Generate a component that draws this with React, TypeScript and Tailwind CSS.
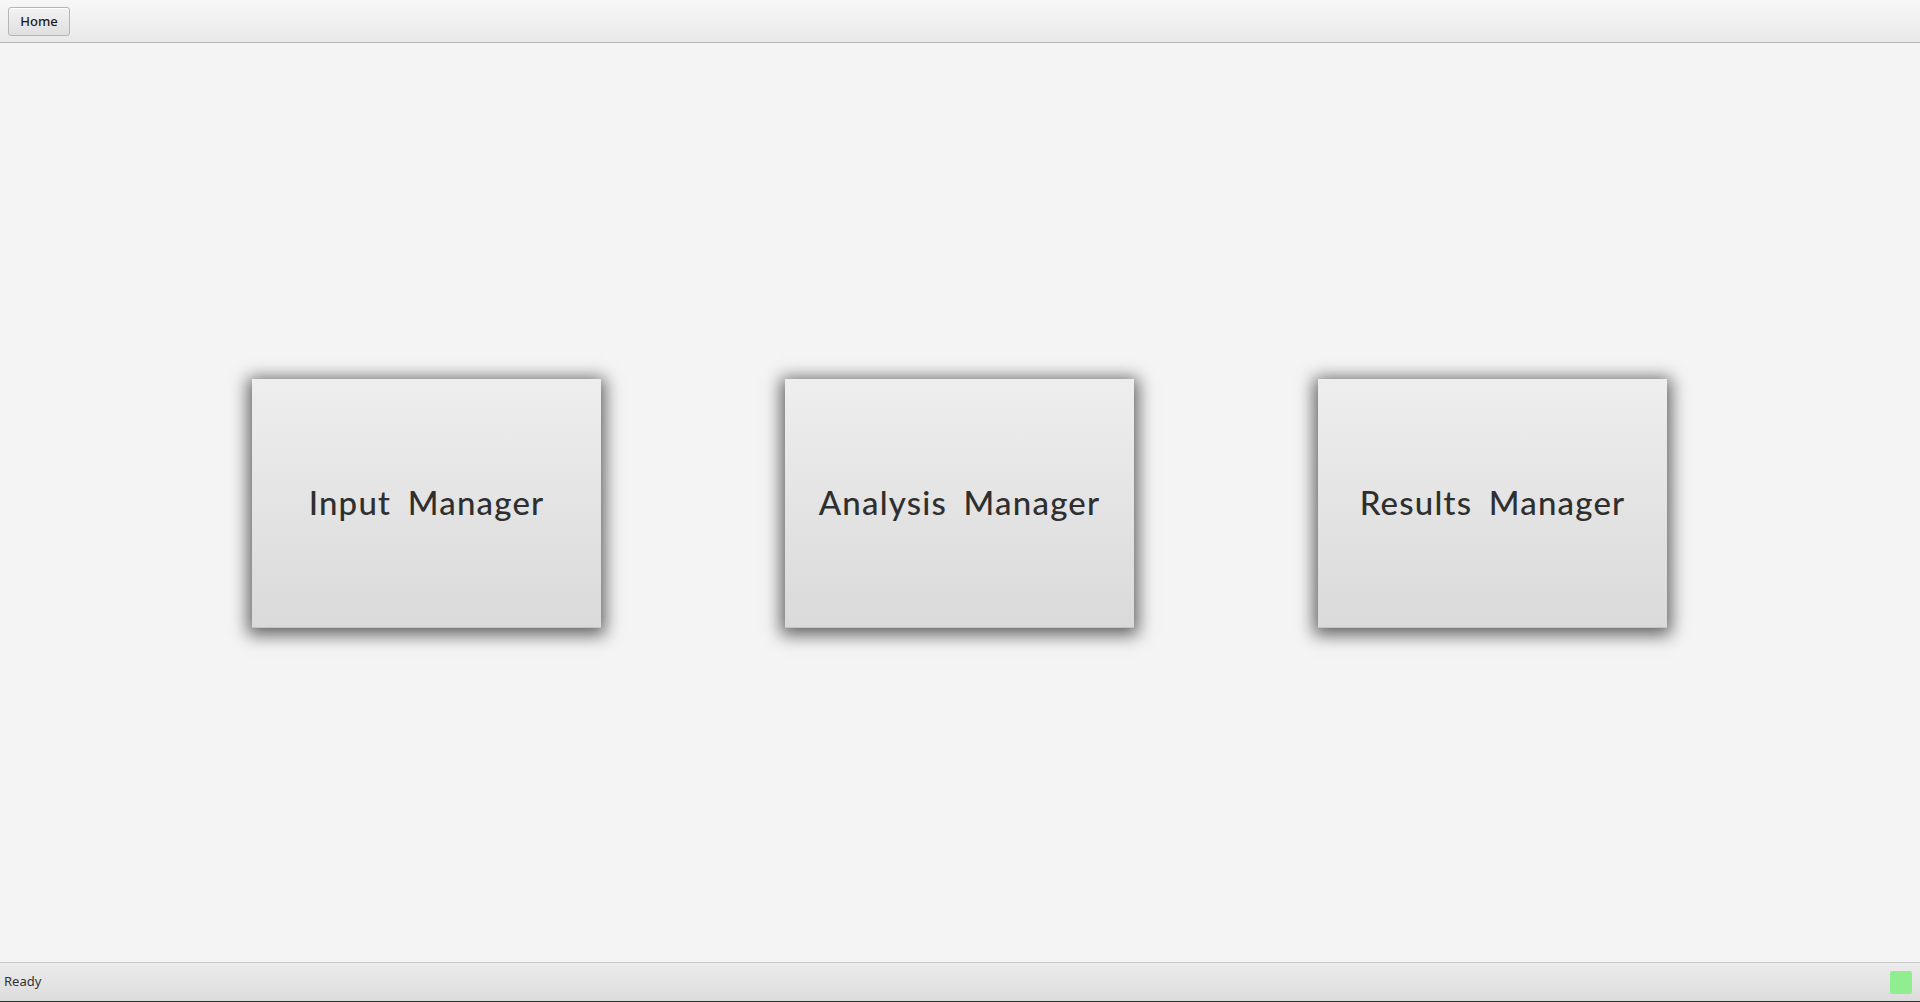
import React from 'react';

const cards = ['Input Manager', 'Analysis Manager', 'Results Manager'];

export default function App() {
  return (
    <div className="flex h-[1002px] w-[1920px] flex-col overflow-hidden bg-[#f4f4f4] font-['Noto_Sans',sans-serif]">
      {/* Toolbar */}
      <div className="flex h-[43px] shrink-0 items-start border-b border-[#b8b8b8] bg-gradient-to-b from-[#f7f7f7] to-[#e9e9e9] pl-[8px] pt-[7px]">
        <button className="flex h-[29px] w-[62px] items-center justify-center rounded-[3px] border border-[#b5b5b5] bg-gradient-to-b from-[#f3f3f3] to-[#dfdfdf] text-[13px] font-medium text-[#1a1a1a] shadow-[inset_0_1px_0_#ffffff]">
          Home
        </button>
      </div>

      {/* Main area */}
      <div className="flex flex-1 items-center justify-center gap-[184px] pt-px pr-px">
        {cards.map((c) => (
          <div
            key={c}
            className="flex h-[249px] w-[349px] items-center justify-center border-b border-[#c4c4c4] bg-gradient-to-b from-[#eeeeee] to-[#dadada] shadow-[0_3px_16px_4px_rgba(0,0,0,0.6)]"
          >
            <span className="font-['Lato',sans-serif] text-[33px] font-medium tracking-[1.2px] text-[#2f2f2f] [word-spacing:7px]">
              {c}
            </span>
          </div>
        ))}
      </div>

      {/* Status bar */}
      <div className="flex h-[40px] shrink-0 items-center justify-between border-t border-[#c8c8c8] border-b border-b-[#1f3a2c] bg-gradient-to-b from-[#ececec] to-[#dcdcdc] pl-[4px] pr-[8px]">
        <span className="text-[13px] text-[#333333]">Ready</span>
        <div className="h-[23px] w-[22px] rounded-[2px] bg-[#90ee90]" />
      </div>
    </div>
  );
}
